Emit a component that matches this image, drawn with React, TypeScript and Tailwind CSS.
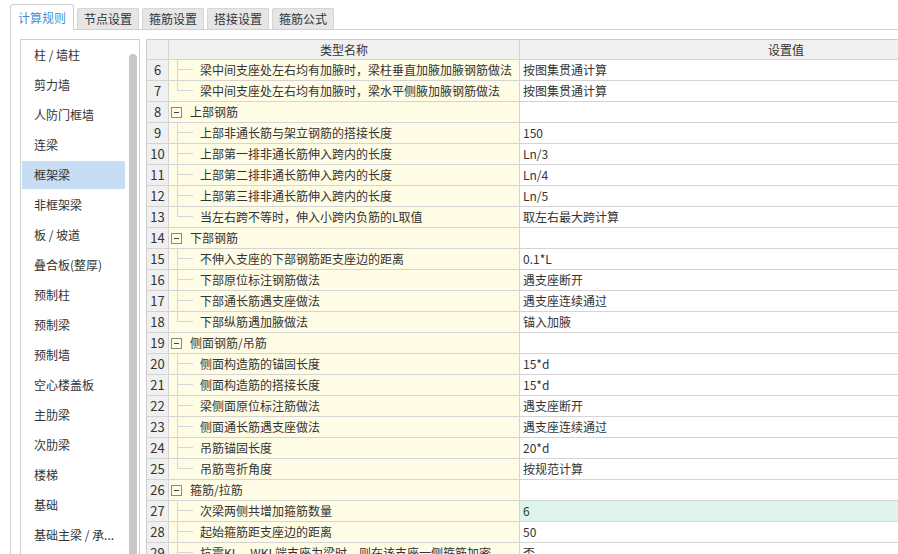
import React from 'react';

type Row = {
  n: number;
  name: string;
  value?: string;
  group?: boolean;
  last?: boolean;
  hl?: boolean;
};

const tabs = ['计算规则', '节点设置', '箍筋设置', '搭接设置', '箍筋公式'];

const menu = [
  '柱 / 墙柱',
  '剪力墙',
  '人防门框墙',
  '连梁',
  '框架梁',
  '非框架梁',
  '板 / 坡道',
  '叠合板(整厚)',
  '预制柱',
  '预制梁',
  '预制墙',
  '空心楼盖板',
  '主肋梁',
  '次肋梁',
  '楼梯',
  '基础',
  '基础主梁 / 承...',
];

const rows: Row[] = [
  { n: 6, name: '梁中间支座处左右均有加腋时，梁柱垂直加腋加腋钢筋做法', value: '按图集贯通计算' },
  { n: 7, name: '梁中间支座处左右均有加腋时，梁水平侧腋加腋钢筋做法', value: '按图集贯通计算', last: true },
  { n: 8, name: '上部钢筋', group: true },
  { n: 9, name: '上部非通长筋与架立钢筋的搭接长度', value: '150' },
  { n: 10, name: '上部第一排非通长筋伸入跨内的长度', value: 'Ln/3' },
  { n: 11, name: '上部第二排非通长筋伸入跨内的长度', value: 'Ln/4' },
  { n: 12, name: '上部第三排非通长筋伸入跨内的长度', value: 'Ln/5' },
  { n: 13, name: '当左右跨不等时，伸入小跨内负筋的L取值', value: '取左右最大跨计算', last: true },
  { n: 14, name: '下部钢筋', group: true },
  { n: 15, name: '不伸入支座的下部钢筋距支座边的距离', value: '0.1*L' },
  { n: 16, name: '下部原位标注钢筋做法', value: '遇支座断开' },
  { n: 17, name: '下部通长筋遇支座做法', value: '遇支座连续通过' },
  { n: 18, name: '下部纵筋遇加腋做法', value: '锚入加腋', last: true },
  { n: 19, name: '侧面钢筋/吊筋', group: true },
  { n: 20, name: '侧面构造筋的锚固长度', value: '15*d' },
  { n: 21, name: '侧面构造筋的搭接长度', value: '15*d' },
  { n: 22, name: '梁侧面原位标注筋做法', value: '遇支座断开' },
  { n: 23, name: '侧面通长筋遇支座做法', value: '遇支座连续通过' },
  { n: 24, name: '吊筋锚固长度', value: '20*d' },
  { n: 25, name: '吊筋弯折角度', value: '按规范计算', last: true },
  { n: 26, name: '箍筋/拉筋', group: true },
  { n: 27, name: '次梁两侧共增加箍筋数量', value: '6', hl: true },
  { n: 28, name: '起始箍筋距支座边的距离', value: '50' },
  { n: 29, name: '抗震KL、WKL端支座为梁时，则在该支座一侧箍筋加密', value: '否' },
];

const font = { fontFamily: '"Noto Sans CJK SC", "Noto Sans", sans-serif' };

const TreeLine = ({ last }: { last?: boolean }) => (
  <svg width="23" height="20" className="shrink-0">
    <line x1="0.5" y1="0" x2="0.5" y2={last ? 9.5 : 20} stroke="#d6d6d6" />
    <line x1="0" y1="9.5" x2="16" y2="9.5" stroke="#d6d6d6" />
  </svg>
);

const App = () => {
  return (
    <div className="w-[898px] h-[554px] overflow-hidden bg-white text-[12px] text-[#333]" style={font}>
      {/* tabs */}
      <div className="ml-[10px] h-[30px] flex items-end gap-[3px] border-b border-[#cfcfcf]">
        {tabs.map((t, i) =>
          i === 0 ? (
            <div
              key={t}
              className="h-[26px] -mb-px px-[7px] flex items-center bg-white border border-b-0 border-[#cfcfcf] rounded-t-[3px] text-[#3f8fd8]"
            >
              {t}
            </div>
          ) : (
            <div
              key={t}
              className="h-[21px] px-[6px] flex items-center bg-[#e6e6e6] border border-b-0 border-[#d6d6d6] rounded-t-[2px]"
            >
              {t}
            </div>
          )
        )}
      </div>

      {/* panel */}
      <div className="ml-[10px] h-[600px] border-l border-[#cfcfcf] flex items-start pt-[9px] pl-[9px] gap-[6px]">
        {/* side list */}
        <div className="w-[120px] h-[560px] shrink-0 border border-[#cfcfcf] flex">
          <div className="flex-1 flex flex-col">
            {menu.map((m, i) => (
              <div key={m} className="h-[30px] py-px pl-px shrink-0">
                <div
                  className={`h-[28px] w-[103px] pl-[12px] flex items-center whitespace-nowrap ${
                    i === 4 ? 'bg-[#c6ddf3]' : ''
                  }`}
                >
                  {m}
                </div>
              </div>
            ))}
          </div>
          <div className="w-[13px] pt-[14px] pl-[3px] shrink-0">
            <div className="w-[8px] h-[600px] bg-[#c8c8c8] rounded-t-full" />
          </div>
        </div>

        {/* table */}
        <div className="shrink-0 w-[906px] border-l border-t border-[#cccccc]">
          <div className="grid grid-cols-[22px_351px_533px] h-[20px] bg-[#f0f0f0]">
            <div className="border-r border-b border-[#d4d4d4]" />
            <div className="border-r border-b border-[#d4d4d4] flex items-center justify-center">类型名称</div>
            <div className="border-r border-b border-[#d4d4d4] flex items-center justify-center">设置值</div>
          </div>
          {rows.map((r) => (
            <div key={r.n} className="grid grid-cols-[22px_351px_533px] h-[21px]">
              <div className="border-r border-b border-[#d4d4d4] bg-[#f0f0f0] flex items-center justify-center text-[13px]">
                {r.n}
              </div>
              <div className="border-r border-b border-[#d4d4d4] bg-[#fffce6] flex items-center whitespace-nowrap overflow-hidden">
                {r.group ? (
                  <>
                    <div className="ml-[2px] w-[11px] h-[11px] border border-[#8a8a8a] flex items-center justify-center shrink-0">
                      <div className="w-[5px] h-px bg-[#444]" />
                    </div>
                    <span className="ml-[8px]">{r.name}</span>
                  </>
                ) : (
                  <>
                    <div className="w-[8px] shrink-0" />
                    <TreeLine last={r.last} />
                    <span>{r.name}</span>
                  </>
                )}
              </div>
              <div
                className={`border-r border-b border-[#d4d4d4] flex items-center pl-[3px] whitespace-nowrap ${
                  r.hl ? 'bg-[#ddf5ec]' : 'bg-white'
                }`}
              >
                {r.value}
              </div>
            </div>
          ))}
        </div>
      </div>
    </div>
  );
};

export default App;
